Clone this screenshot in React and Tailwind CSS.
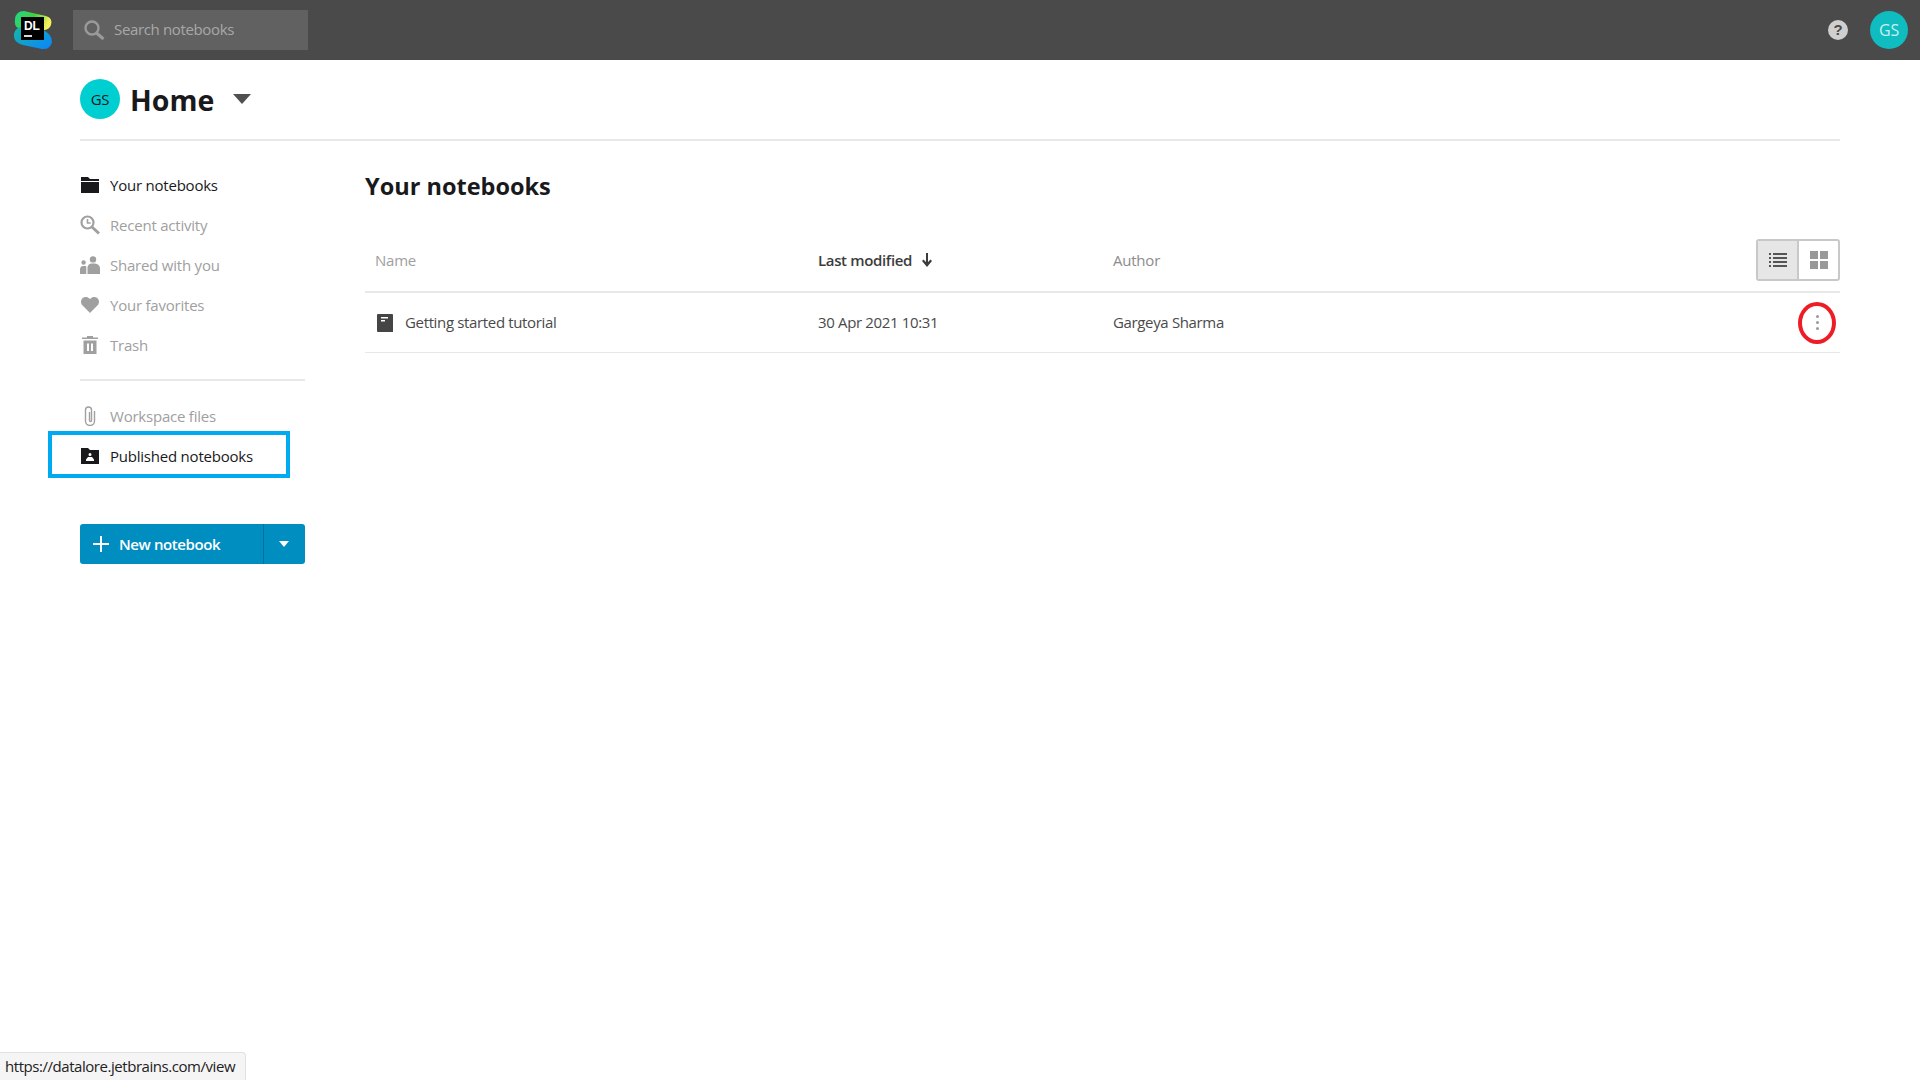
import React from "react";

function Avatar({ className }) {
  return <div className={"rounded-full flex items-center justify-center " + className}>GS</div>;
}

const I = {
  folder: (
    <svg width="18" height="16" viewBox="0 0 18 16"><path d="M0 0h7l2 2h9v2H0zM0 5h18v11H0z" fill="currentColor" /></svg>
  ),
  recent: (
    <svg width="20" height="20" viewBox="0 0 20 20" fill="none" stroke="currentColor"><circle cx="7.5" cy="7.5" r="6" strokeWidth="2.2" /><path d="M7.5 4v4h3.2" strokeWidth="1.6" /><path d="M12 12l7 6.5" strokeWidth="3" /></svg>
  ),
  shared: (
    <svg width="20" height="18" viewBox="0 0 20 18" fill="currentColor"><circle cx="13" cy="3.4" r="3.2" /><path d="M7.5 18v-6.5Q8 8 11 7.5h4q4 .5 5 4V18z" /><circle cx="3.6" cy="6.5" r="2.2" /><path d="M0 18v-5q.5-3 3-3h2.5q.8 0 .8 1V18z" /></svg>
  ),
  heart: (
    <svg width="18" height="16" viewBox="0 0 18 16" fill="currentColor"><path d="M9 16L1.6 8.6C-.5 6.500-.5 3.200 1.500 1.300 3.500-.5 6.800-.4 9 2.100c2.200-2.500 5.500-2.600 7.500-.8 2 1.900 2 5.200-.1 7.300z" /></svg>
  ),
  trash: (
    <svg width="16" height="18" viewBox="0 0 16 18" fill="currentColor"><path d="M5 0h6v1.500h5V3H0V1.500h5zM1.500 4.500h13V18h-13zM5 7.500V15h2V7.500zM9 7.500V15h2V7.500z" fillRule="evenodd" /></svg>
  ),
  clip: (
    <svg width="12" height="20" viewBox="0 0 12 20" fill="none" stroke="currentColor" strokeWidth="1.4"><path d="M10.500 5v10a4.500 4.500 0 0 1-9 0V4a3 3 0 0 1 6 0v10.500a1 1 0 0 1-2 0V6" /></svg>
  ),
  pub: (
    <svg width="18" height="16" viewBox="0 0 18 16"><path fillRule="evenodd" fill="currentColor" d="M0 0h7l2 2h9v14H0zM9 5a1.500 1.500 0 1 0 0 3 1.500 1.500 0 0 0 0-3zM5 13h8v-1.500L11 9H7l-2 2.500z" /></svg>
  ),
};

function NavItem({ icon, label, active }) {
  return (
    <div className={"h-10 flex items-center text-[15px] " + (active ? "text-[#19191c]" : "text-[#a0a0a0]")}>
      <span className="w-[20px] flex justify-center shrink-0">{icon}</span>
      <span className="ml-[10px] whitespace-nowrap">{label}</span>
    </div>
  );
}

export default function App() {
  return (
    <div className="relative w-[1920px] h-[1080px] bg-white overflow-hidden font-['Open_Sans','Noto_Sans',sans-serif] tracking-[-0.22px]">
      {/* Top bar */}
      <header className="h-[60px] bg-[#4a4a4a] flex items-center pl-[13px] pr-[12px]">
        <svg width="42" height="40" viewBox="0 0 42 40" className="shrink-0">
          <defs>
            <linearGradient id="dlA" x1="0" y1="0" x2="1" y2="0.3"><stop offset="0" stopColor="#21d789" /><stop offset="0.55" stopColor="#3fcf3f" /><stop offset="1" stopColor="#f4f05a" /></linearGradient>
            <linearGradient id="dlB" x1="0" y1="0" x2="1" y2="1"><stop offset="0" stopColor="#14b8a6" /><stop offset="1" stopColor="#0a84ff" /></linearGradient>
          </defs>
          <path d="M2 9Q3 1 11 1L33 6Q40 8 38 15Q36 21 28 20L5 18Q1 16 2 9z" fill="url(#dlA)" />
          <path d="M1 27Q0 20 7 17L30 20Q39 24 39 32Q37 40 29 39L10 35Q2 33 1 27z" fill="url(#dlB)" />
          <rect x="8" y="7" width="23" height="23" fill="#000" />
          <text x="11" y="20" fill="#fff" fontSize="12" fontWeight="700" fontFamily="'Liberation Sans',sans-serif">DL</text>
          <rect x="11" y="25" width="8" height="2" fill="#fff" opacity="0.85" />
        </svg>
        <div className="ml-[18px] w-[235px] h-10 bg-[#616161] flex items-center pl-[10px] text-[15px] leading-[38px] text-[#a8a8a8] tracking-[-0.35px]">
          <svg width="22" height="22" viewBox="0 0 22 22" fill="none" stroke="#9a9a9a"><circle cx="9" cy="9" r="6.500" strokeWidth="2.400" /><path d="M13.500 14l7 6" strokeWidth="3" /></svg>
          <span className="ml-[9px] -mt-[2px]">Search notebooks</span>
        </div>
        <div className="ml-auto flex items-center">
          <div className="w-5 h-5 rounded-full bg-[#cfcfcf] flex items-center justify-center text-[15px] font-bold text-[#4a4a4a] font-['Liberation_Sans',sans-serif]">?</div>
          <Avatar className="ml-[22px] w-[38px] h-[38px] bg-[#0fbcc0] text-[#c8f0f0] text-[16px]" />
        </div>
      </header>

      <div className="mx-[80px]">
        {/* Title row */}
        <div className="h-[81px] border-b-2 border-[#e8e8e8] flex items-start pt-[19px]">
          <Avatar className="w-10 h-10 bg-[#00cfd2] text-[#19191c] text-[15px]" />
          <h1 className="ml-[10px] text-[28.5px] leading-[42px] font-bold text-[#19191c] tracking-normal">Home</h1>
          <svg width="18" height="10" viewBox="0 0 18 10" className="ml-[19px] mt-[15px]"><path d="M0 0h18l-9 10z" fill="#505050" /></svg>
        </div>

        <div className="flex">
          {/* Sidebar */}
          <aside className="w-[225px] shrink-0 pt-[24px]">
            <NavItem icon={I.folder} label="Your notebooks" active />
            <NavItem icon={I.recent} label="Recent activity" />
            <NavItem icon={I.shared} label="Shared with you" />
            <NavItem icon={I.heart} label="Your favorites" />
            <NavItem icon={I.trash} label="Trash" />
            <div className="h-[2px] bg-[#e8e8e8] mt-[14px] mb-[15px]" />
            <NavItem icon={I.clip} label="Workspace files" />
            <NavItem icon={I.pub} label="Published notebooks" active />
            <div className="mt-[48px] h-10 rounded-[3px] bg-[#008dc0] text-white flex items-center">
              <div className="w-[184px] h-full flex items-center pl-[13px] border-r border-[#00719a]">
                <svg width="16" height="16" viewBox="0 0 16 16"><path d="M7 0h2v7h7v2H9v7H7V9H0V7h7z" fill="#fff" /></svg>
                <span className="ml-[10px] text-[15px] font-semibold whitespace-nowrap tracking-[-0.4px]">New notebook</span>
              </div>
              <div className="flex-1 flex justify-center pr-[2px]">
                <svg width="10" height="6" viewBox="0 0 10 6"><path d="M0 0h10L5 6z" fill="#fff" /></svg>
              </div>
            </div>
          </aside>

          {/* Main */}
          <main className="ml-[60px] flex-1 pt-[23px]">
            <h2 className="text-[23.5px] leading-[44px] font-bold text-[#19191c] tracking-normal">Your notebooks</h2>
            <div className="mt-[31px] h-[54px] border-b-2 border-[#e8e8e8] flex items-start text-[15px]">
              <div className="w-[453px] pl-[10px] pt-[10px] text-[#a0a0a0]">Name</div>
              <div className="w-[295px] pt-[10px] font-semibold text-[#3c3c3c] flex items-center tracking-[-0.35px]">
                Last modified
                <svg width="10" height="14" viewBox="0 0 10 14" className="ml-[10px]"><path d="M4 0h2v9l2.500-2.500L10 8l-5 6-5-6 1.500-1.500L4 9z" fill="#3c3c3c" /></svg>
              </div>
              <div className="pt-[10px] text-[#8c8c8c]">Author</div>
              <div className="ml-auto w-[84px] h-[42px] flex border-2 border-[#c8c8c8] rounded-[3px] overflow-hidden">
                <div className="w-[41px] bg-[#e6e6e6] border-r-2 border-[#c8c8c8] flex items-center justify-center">
                  <svg width="18" height="18" viewBox="0 0 18 18" fill="#555"><path d="M0 2h2v2H0zM0 6h2v2H0zM0 10h2v2H0zM0 14h2v2H0zM4 2h14v2H4zM4 6h14v2H4zM4 10h14v2H4zM4 14h14v2H4z" /></svg>
                </div>
                <div className="flex-1 flex items-center justify-center">
                  <svg width="18" height="18" viewBox="0 0 18 18" fill="#999"><path d="M0 0h8v8H0zM10 0h8v8h-8zM0 10h8v8H0zM10 10h8v8h-8z" /></svg>
                </div>
              </div>
            </div>
            <div className="h-[60px] border-b border-[#e8e8e8] flex items-center text-[15px] text-[#4a4a4a] tracking-[-0.35px]">
              <div className="w-[453px] pl-[12px] flex items-center">
                <svg width="16" height="18" viewBox="0 0 16 18"><path fillRule="evenodd" fill="#454545" d="M1 0h14a1 1 0 0 1 1 1v17H1a1 1 0 0 1-1-1V1a1 1 0 0 1 1-1zM4 3v1.500h7V3zM4 6v1.500h4V6z" /></svg>
                <span className="ml-[12px]">Getting started tutorial</span>
              </div>
              <div className="w-[295px]">30 Apr 2021 10:31</div>
              <div>Gargeya Sharma</div>
              <div className="ml-auto mr-[21px] flex flex-col gap-[3px]">
                <span className="w-[3px] h-[3px] rounded-full bg-[#999]" />
                <span className="w-[3px] h-[3px] rounded-full bg-[#999]" />
                <span className="w-[3px] h-[3px] rounded-full bg-[#999]" />
              </div>
            </div>
          </main>
        </div>
      </div>

      {/* Annotations */}
      <div className="absolute left-[48px] top-[431px] w-[242px] h-[47px] border-[4px] border-[#00aaf0]" />
      <div className="absolute left-[1798px] top-[302px] w-[38px] h-[42px] rounded-[50%] border-[4px] border-[#ee1c25]" />

      {/* Status bubble */}
      <div className="absolute left-0 bottom-0 w-[246px] h-[28px] bg-[#f5f5f5] border-t border-r border-[#e2e2e2] rounded-tr-[4px] pl-[5px] text-[15px] leading-[26px] text-[#222] whitespace-nowrap tracking-[-0.45px]">
        https://datalore.jetbrains.com/view
      </div>
    </div>
  );
}
